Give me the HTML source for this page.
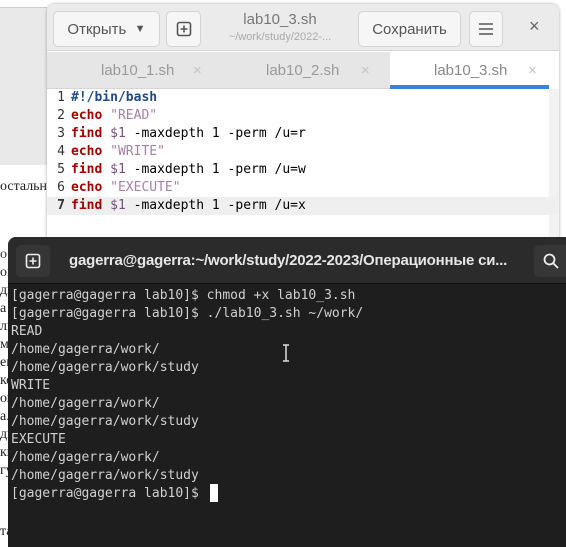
<!DOCTYPE html>
<html><head><meta charset="utf-8"><style>
*{margin:0;padding:0;box-sizing:border-box}
body{width:566px;height:542px;overflow:hidden;background:#fff;position:relative;font-family:"Liberation Sans","DejaVu Sans",sans-serif}
.abs{position:absolute}
.mono{font-family:"DejaVu Sans Mono","Liberation Mono",monospace;font-size:13px}
.lf{position:absolute;left:0;font-family:"Liberation Serif",serif;font-size:14px;color:#222;white-space:nowrap}
.btn{position:absolute;border:1px solid #d4d4d4;border-radius:5px;background:#f6f6f6;color:#555;font-size:15px;display:flex;align-items:center;justify-content:center}
.tab{position:absolute;top:51px;height:37px;color:#9a9a9a;font-size:15px;line-height:37px}
.cl{position:absolute;left:0;width:511px;height:18px;line-height:18px;white-space:pre}
.n{display:inline-block;width:24px;text-align:right;color:#333;padding-right:6px}
.k{color:#a40000;font-weight:bold}
.s{color:#a97fa8}
.v{color:#75507b}
.tl{position:absolute;left:11px;height:18px;line-height:18px;color:#d0d0d0;white-space:pre}
</style></head><body>
<div class="abs" style="left:0;top:8px;width:47px;height:157px;background:#e9e9e9"></div>
<div class="abs" style="left:0;top:7px;width:47px;height:1px;background:#ccc"></div>
<div class="lf" style="top:179px">остальн</div>
<div class="lf" style="top:247px;color:#335">о</div>
<div class="lf" style="top:265px">ои</div>
<div class="lf" style="top:283px">дн</div>
<div class="lf" style="top:301px">а</div>
<div class="lf" style="top:319px">ль</div>
<div class="lf" style="top:337px">ме</div>
<div class="lf" style="top:355px">ен</div>
<div class="lf" style="top:373px">ко</div>
<div class="lf" style="top:391px">ом</div>
<div class="lf" style="top:409px">а.</div>
<div class="lf" style="top:427px">дн</div>
<div class="lf" style="top:445px">ки</div>
<div class="lf" style="top:463px">гу</div>
<div class="lf" style="top:524px">та</div>

<!-- editor -->
<div class="abs" style="left:47px;top:4px;width:512px;height:240px;background:#fff;border-radius:8px 8px 0 0;box-shadow:0 0 3px rgba(0,0,0,.35);overflow:hidden">
 <div class="abs" style="left:0;top:0;width:512px;height:47px;background:#ebebeb;border-bottom:1px solid #d6d6d6"></div>
 <div class="btn" style="left:6px;top:7px;width:107px;height:36px">Открыть&nbsp;&nbsp;<span style="font-size:11px">▼</span></div>
 <div class="btn" style="left:119px;top:7px;width:35px;height:36px"><svg width="16" height="16" viewBox="0 0 16 16"><rect x="1.5" y="1.5" width="13" height="13" rx="2" fill="none" stroke="#555" stroke-width="1.6"/><path d="M8 4.5v7M4.5 8h7" stroke="#555" stroke-width="1.6"/></svg></div>
 <div class="abs" style="left:153px;top:7px;width:160px;text-align:center;font-size:15px;color:#777">lab10_3.sh</div>
 <div class="abs" style="left:153px;top:27px;width:160px;text-align:center;font-size:11px;color:#aaa">~/work/study/2022-...</div>
 <div class="btn" style="left:311px;top:7px;width:103px;height:36px">Сохранить</div>
 <div class="btn" style="left:422px;top:7px;width:34px;height:36px"><svg width="14" height="12"><path d="M0 1h14M0 6h14M0 11h14" stroke="#555" stroke-width="1.6"/></svg></div>
 <div class="abs" style="left:482px;top:12px;font-size:18px;color:#666">×</div>
 <div class="abs" style="left:0;top:48px;width:502px;height:37px;background:#e6e6e6;border-bottom:1px solid #d6d6d6"></div>
 <div class="tab" style="left:54px;top:48px">lab10_1.sh<span style="position:absolute;left:92px;color:#c4c4c4">×</span></div>
 <div class="tab" style="left:219px;top:48px">lab10_2.sh<span style="position:absolute;left:95px;color:#c4c4c4">×</span></div>
 <div class="abs" style="left:343px;top:48px;width:159px;height:37px;background:#fff"></div>
 <div class="tab" style="left:387px;top:48px;color:#888">lab10_3.sh<span style="position:absolute;left:94px;color:#c4c4c4">×</span></div>
 <div class="abs" style="left:343px;top:81px;width:159px;height:4px;background:#3584e4"></div>
 <div class="abs" style="left:502px;top:85px;width:10px;height:160px;background:#f2f2f2"></div>
 <div class="abs mono" style="left:0;top:85px">
  <div class="cl" style="top:0"><span class="n">1</span><span style="color:#204a87;font-weight:bold">#!/bin/bash</span></div>
  <div class="cl" style="top:18px"><span class="n">2</span><span class="k">echo</span> <span class="s">"READ"</span></div>
  <div class="cl" style="top:36px"><span class="n">3</span><span class="k">find</span> <span class="v">$1</span> -maxdepth 1 -perm /u=r</div>
  <div class="cl" style="top:54px"><span class="n">4</span><span class="k">echo</span> <span class="s">"WRITE"</span></div>
  <div class="cl" style="top:72px"><span class="n">5</span><span class="k">find</span> <span class="v">$1</span> -maxdepth 1 -perm /u=w</div>
  <div class="cl" style="top:90px"><span class="n">6</span><span class="k">echo</span> <span class="s">"EXECUTE"</span></div>
  <div class="cl" style="top:108px;background:#efefef"><span class="n" style="font-weight:bold">7</span><span class="k">find</span> <span class="v">$1</span> -maxdepth 1 -perm /u=x</div>
 </div>
</div>

<!-- terminal -->
<div class="abs" style="left:8px;top:237px;width:570px;height:310px;background:#1e1e1e;border-radius:8px 0 0 0;overflow:hidden">
 <div class="abs" style="left:0;top:0;width:570px;height:47px;background:#2b2b2b;border-bottom:1px solid #111"></div>
 <div class="abs" style="left:8px;top:8px;width:34px;height:32px;background:#363636;border-radius:5px;display:flex;align-items:center;justify-content:center"><svg width="16" height="16" viewBox="0 0 16 16"><rect x="1.5" y="1.5" width="13" height="13" rx="2" fill="none" stroke="#eee" stroke-width="1.6"/><path d="M8 4.5v7M4.5 8h7" stroke="#eee" stroke-width="1.6"/></svg></div>
 <div class="abs" style="left:61px;top:15px;font-size:15px;font-weight:bold;color:#e6e6e6;white-space:nowrap;letter-spacing:-0.2px">gagerra@gagerra:~/work/study/2022-2023/Операционные си...</div>
 <div class="abs" style="left:526px;top:8px;width:40px;height:32px;background:#363636;border-radius:5px"><svg class="abs" style="left:9px;top:8px" width="16" height="16"><circle cx="6.5" cy="6.5" r="5" fill="none" stroke="#eee" stroke-width="1.8"/><path d="M10 10l5 5" stroke="#eee" stroke-width="1.8"/></svg></div>
 <div class="mono" style="position:absolute;left:-8px;top:50px">
  <div class="tl" style="top:0">[gagerra@gagerra lab10]$ chmod +x lab10_3.sh</div>
  <div class="tl" style="top:18px">[gagerra@gagerra lab10]$ ./lab10_3.sh ~/work/</div>
  <div class="tl" style="top:36px">READ</div>
  <div class="tl" style="top:54px">/home/gagerra/work/</div>
  <div class="tl" style="top:72px">/home/gagerra/work/study</div>
  <div class="tl" style="top:90px">WRITE</div>
  <div class="tl" style="top:108px">/home/gagerra/work/</div>
  <div class="tl" style="top:126px">/home/gagerra/work/study</div>
  <div class="tl" style="top:144px">EXECUTE</div>
  <div class="tl" style="top:162px">/home/gagerra/work/</div>
  <div class="tl" style="top:180px">/home/gagerra/work/study</div>
  <div class="tl" style="top:198px">[gagerra@gagerra lab10]$ </div>
 </div>
 <div class="abs" style="left:202px;top:247px;width:8px;height:18px;background:#fff"></div>
 <svg class="abs" style="left:274px;top:107px" width="8" height="18"><path d="M1 1h6M4 1v16M1 17h6" stroke="#ddd" stroke-width="1.5"/></svg>
</div>
</body></html>
